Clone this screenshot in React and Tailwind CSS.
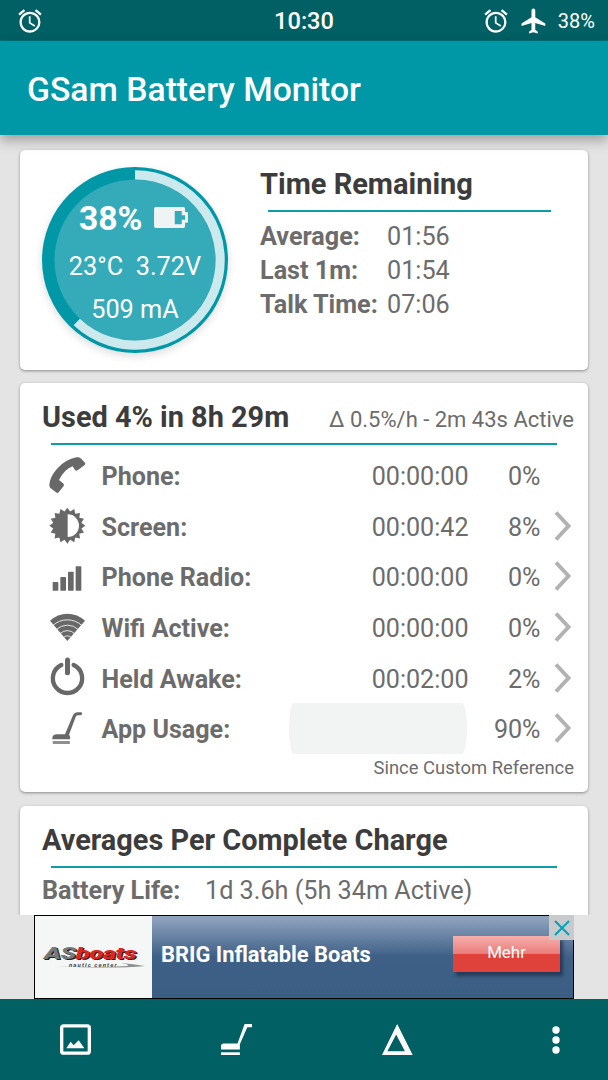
const usage = [
  { icon: "phone", label: "Phone:", time: "00:00:00", percent: "0%", more: false },
  { icon: "screen", label: "Screen:", time: "00:00:42", percent: "8%", more: true },
  { icon: "radio", label: "Phone Radio:", time: "00:00:00", percent: "0%", more: true },
  { icon: "wifi", label: "Wifi Active:", time: "00:00:00", percent: "0%", more: true },
  { icon: "power", label: "Held Awake:", time: "00:02:00", percent: "2%", more: true },
  { icon: "sweeper", label: "App Usage:", time: null, percent: "90%", more: true },
];

const remaining = [
  { label: "Average:", value: "01:56" },
  { label: "Last 1m:", value: "01:54" },
  { label: "Talk Time:", value: "07:06" },
];

function sunPoints(cx, cy, outer, inner, spikes) {
  const points = [];
  for (let i = 0; i < spikes * 2; i++) {
    const r = i % 2 === 0 ? outer : inner;
    const a = (i * Math.PI) / spikes;
    points.push(`${(cx + r * Math.sin(a)).toFixed(1)},${(cy - r * Math.cos(a)).toFixed(1)}`);
  }
  return points.join(" ");
}

const glyphs = {
  phone: (
    <path d="M88 4Q96 2 101 7L114 20Q117 24 113 27L93 42Q87 47 84 42L77 31Q52 40 36 72L48 82Q53 86 50 90L35 109Q31 113 27 109L10 96Q7 92 7 86Q9 62 30 38Q56 10 88 4Z" />
  ),
  screen: (
    <>
      <polygon points={sunPoints(61, 56, 54, 43, 16)} />
      <path d="M62 22A34 34 0 0 1 62 90Z" fill="#fff" />
    </>
  ),
  radio: (
    <>
      <rect x="17" y="75" width="17" height="26" rx="2" />
      <rect x="40" y="60" width="17" height="41" rx="2" />
      <rect x="63" y="44" width="17" height="57" rx="2" />
      <rect x="86" y="28" width="17" height="73" rx="2" />
    </>
  ),
  wifi: (
    <>
      <path d="M61 99L9 38Q32 17 61 17Q91 17 114 38Z" />
      <g fill="none" stroke="#fff" strokeWidth="2.5">
        <path d="M17 53A64 64 0 0 1 105 53" />
        <path d="M28 65A47 47 0 0 1 94 65" />
        <path d="M39 77A31 31 0 0 1 83 77" />
        <path d="M50 88A16 16 0 0 1 72 88" />
      </g>
    </>
  ),
  power: (
    <g fill="none" stroke="#686868" strokeLinecap="round">
      <path d="M80 18A44 44 0 1 1 43 18" strokeWidth="13" />
      <path d="M61.500 3V41" strokeWidth="21" stroke="#fff" />
      <path d="M61.500 3V41" strokeWidth="15" />
    </g>
  ),
  sweeper: (
    <>
      <path d="M16 91V86Q18 76 30 76H54L78 19Q82 10 92 10H102Q107 11 105 15Q104 19 99 19H92Q88 19 86 24L66 77Q69 79 69 84V91Z" />
      <rect x="17" y="96" width="52" height="9" rx="2" fill="#8f8f8f" />
    </>
  ),
};

function RowIcon({ name }) {
  return (
    <svg viewBox="0 0 120 120" className="h-10 w-10 shrink-0 overflow-visible" fill="#686868">
      {glyphs[name]}
    </svg>
  );
}

function AlarmIcon() {
  return (
    <svg viewBox="0 0 24 24" className="h-7 w-7" fill="#fff">
      <path d="M22 5.720l-4.600-3.860-1.290 1.530 4.600 3.860L22 5.720zM7.880 3.390L6.600 1.860 2 5.710l1.290 1.530 4.590-3.850zM12.500 8H11v6l4.750 2.850.75-1.230-4-2.370V8zM12 4c-4.970 0-9 4.030-9 9s4.020 9 9 9a9 9 0 0 0 0-18zm0 16c-3.870 0-7-3.130-7-7s3.130-7 7-7 7 3.130 7 7-3.130 7-7 7z" />
    </svg>
  );
}

function StatusBar() {
  return (
    <div className="flex h-[41px] shrink-0 items-center border-b border-[#007078] bg-[#006064] pt-px text-white">
      <div className="flex-1 pl-[16px]"><AlarmIcon /></div>
      <span className="pr-[3px] text-[23.6px] font-medium leading-[40px]">10:30</span>
      <div className="flex flex-1 items-center justify-end pr-[13px]">
        <AlarmIcon />
        <svg viewBox="0 0 24 24" className="ml-[9px] h-[30px] w-[30px]" fill="#fff">
          <path d="M21 16v-2l-8-5V3.500c0-.83-.67-1.500-1.500-1.500S10 2.670 10 3.500V9l-8 5v2l8-2.500V19l-2 1.500V22l3.500-1 3.500 1v-1.500L13 19v-5.500l8 2.500z" />
        </svg>
        <span className="ml-[9px] text-[20px] leading-[40px]">38%</span>
      </div>
    </div>
  );
}

function BatteryGauge() {
  return (
    <div className="grid h-[186px] w-[186px] shrink-0 rounded-full shadow-[0_3px_8px_rgba(0,0,0,0.14)]">
      <svg viewBox="0 0 186 186" className="col-start-1 row-start-1 h-[186px] w-[186px]">
        <circle cx="93" cy="93" r="93" fill="#0097a7" />
        <circle cx="93" cy="93" r="80.500" fill="#35abba" />
        <path d="M93 7.900A85.100 85.100 0 1 1 34.750 155" fill="none" stroke="#cce9ed" strokeWidth="9.200" />
      </svg>
      <div className="col-start-1 row-start-1 flex flex-col items-center pt-[30px] text-[25.3px] text-white">
        <div className="flex h-[44px] items-center gap-[11px] pb-[3px] pr-[3px]">
          <span className="pt-[3px] text-[33.7px] font-bold leading-[44px]">38%</span>
          <svg viewBox="0 0 103 63" className="h-[21px] w-[34.500px]">
            <path d="M5 0H88Q93 0 93 5V15H98Q103 15 103 20V42Q103 47 98 47H93V58Q93 63 88 63H5Q0 63 0 58V5Q0 0 5 0ZM62 12V52H83V38H93V25H83V12Z" fill="#eff3f4" fillRule="evenodd" />
          </svg>
        </div>
        <div className="h-[52px] whitespace-pre leading-[52px]">23°C  3.72V</div>
        <div className="h-[34px] leading-[34px]">509 mA</div>
      </div>
    </div>
  );
}

function Card({ className, children }) {
  return (
    <section className={`mx-5 shrink-0 rounded-[5px] bg-white shadow-[0_1px_3px_rgba(0,0,0,0.4)] ${className}`}>
      {children}
    </section>
  );
}

function UsageRow({ row }) {
  return (
    <div className="flex h-[50.600px] items-center text-[25.1px] leading-[50px]">
      <RowIcon name={row.icon} />
      <span className="ml-[14.5px] flex-1 pt-[2px] font-bold">{row.label}</span>
      {row.time ? (
        <span className="pt-[2px]">{row.time}</span>
      ) : (
        <span className="mb-[2px] mr-[1.5px] h-full w-[178px] rounded-[5px/50%] bg-[#f2f4f4]" />
      )}
      <span className="w-[72px] pt-[2px] text-right">{row.percent}</span>
      <span className="flex w-[33.5px] pb-[2px] pl-[11px]">
        {row.more && (
          <svg viewBox="0 0 20 32" className="h-8 w-5" fill="none" stroke="#b2b2b2" strokeWidth="4">
            <path d="M4 2.500L16.500 16L4 29.500" />
          </svg>
        )}
      </span>
    </div>
  );
}

function AdBanner() {
  return (
    <div className="relative ml-[34px] flex h-[84px] w-[540px] shrink-0 border-[1.500px] border-black">
      <div className="flex w-[117px] shrink-0 flex-col bg-[#f5f6f6] pl-[9px] pt-[29px]">
        <div className="h-4 origin-left scale-x-[1.51] whitespace-nowrap text-[17px] font-black italic leading-4 tracking-[-0.3px]">
          <span className="text-[#77787a] [text-shadow:1px_1px_0_#222]">AS</span>
          <span className="text-[#e22420] [text-shadow:1px_1px_0_#222]">boats</span>
        </div>
        <div className="ml-[25px] h-[7px] text-[6px] font-bold italic leading-[7px] tracking-[1.1px] text-[#444]">nautic center</div>
        <svg viewBox="0 0 92 5" className="-mt-[5px] ml-[9px] h-[5px] w-[92px]">
          <path d="M0 3Q60 6 92 3Q80 1 68 0Q78 2 74 3Q40 5 0 3Z" fill="#909090" />
        </svg>
      </div>
      <div className="flex flex-1 items-center bg-linear-to-b from-[#93a6c0] via-[#3e6086] via-50% to-[#3b5e85] pl-[9px] pr-[13px] text-white">
        <span className="flex-1 pb-[4px] text-[21.9px] font-bold">BRIG Inflatable Boats</span>
        <button className="mb-[6px] h-[36px] w-[107px] bg-linear-to-b from-[#f5b0ae] via-[#ea7b78] via-50% to-[#df413b] to-50% pb-[2px] text-[16.9px] shadow-[3px_4px_3px_rgba(20,35,60,0.6)]">
          Mehr
        </button>
      </div>
      <div className="absolute -right-px -top-px flex h-[25px] w-[25px] items-center justify-center bg-[#c9cacc]">
        <svg viewBox="0 0 16 16" className="h-4 w-4" stroke="#00a3bb" strokeWidth="2">
          <path d="M1 1L15 15M15 1L1 15" />
        </svg>
      </div>
    </div>
  );
}

function BottomBar() {
  return (
    <nav className="flex h-[81px] shrink-0 items-center bg-[#006064] pl-[60px]">
      <svg viewBox="0 0 93 92" className="h-[31px] w-[31px]">
        <rect x="5" y="5" width="83" height="82" rx="6" fill="none" stroke="#fff" strokeWidth="10" />
        <path d="M19 72L32 53L41 63L56 48L73 72Z" fill="#fff" />
      </svg>
      <svg viewBox="0 0 92 92" className="ml-[130px] h-[31px] w-[31px]" fill="#fff">
        <path d="M0 76V66Q0 58 8 58H49L70 0H92V10H78L56 60V76Z" />
        <rect y="84" width="56" height="8" />
      </svg>
      <svg viewBox="0 0 92 92" className="ml-[130px] h-[31px] w-[31px]">
        <path d="M45 0L91 92H0ZM42 31L16 81H68Z" fill="#fff" fillRule="evenodd" />
      </svg>
      <svg viewBox="0 0 8 28" className="ml-[139px] h-[28px] w-2" fill="#fff">
        <circle cx="4" cy="4" r="3.700" />
        <circle cx="4" cy="14" r="3.700" />
        <circle cx="4" cy="24" r="3.700" />
      </svg>
    </nav>
  );
}

export default function App() {
  return (
    <div className="flex h-[1080px] w-[608px] flex-col overflow-hidden bg-[#e4e4e4] font-['Roboto',sans-serif] text-[#6c6c6c]">
      <StatusBar />
      <header className="relative z-10 h-[94px] shrink-0 bg-[#0097a7] pl-[27px] pt-[2px] shadow-[0_5px_12px_rgba(0,0,0,0.32)]">
        <h1 className="text-[33.7px] font-medium leading-[94px] text-white">GSam Battery Monitor</h1>
      </header>

      <main className="flex h-[780px] shrink-0 flex-col overflow-hidden pt-[15px]">
        <Card className="flex h-[220px] pl-[22px] pt-[17px]">
          <BatteryGauge />
          <div className="ml-[32px] w-[300px]">
            <h2 className="h-[43px] text-[29px] font-bold leading-[34px] text-[#3c3c3c]">Time Remaining</h2>
            <div className="ml-[8px] h-[2px] w-[283px] bg-[#0d9cab]" />
            <div className="pt-[8px] text-[25.2px] leading-[34px]">
              {remaining.map((item) => (
                <div key={item.label} className="flex">
                  <span className="w-[127px] whitespace-nowrap font-bold">{item.label}</span>
                  <span>{item.value}</span>
                </div>
              ))}
            </div>
          </div>
        </Card>

        <Card className="mt-[13px] h-[409px] pl-[22px] pr-[14px] pt-[14px]">
          <div className="flex h-[46px] justify-between">
            <h2 className="text-[28.9px] font-bold leading-[40px] text-[#3c3c3c]">Used 4% in 8h 29m</h2>
            <span className="text-[22px] leading-[45px]">Δ 0.5%/h - 2m 43s Active</span>
          </div>
          <div className="ml-[9px] h-[2px] w-[506px] bg-[#0d9cab]" />
          <div className="pl-[5px] pt-[6px]">
            {usage.map((row) => (
              <UsageRow key={row.label} row={row} />
            ))}
          </div>
          <div className="text-right text-[18.4px] leading-[25px]">Since Custom Reference</div>
        </Card>

        <Card className="mt-[14px] h-[160px] pl-[22px] pt-[14px]">
          <h2 className="h-[46px] text-[28.9px] font-bold leading-[40px] text-[#3c3c3c]">Averages Per Complete Charge</h2>
          <div className="ml-[9px] h-[2px] w-[506px] bg-[#0d9cab]" />
          <div className="flex pt-[6px] text-[25.200px] leading-[34px]">
            <span className="w-[163px] font-bold">Battery Life:</span>
            <span>1d 3.6h (5h 34m Active)</span>
          </div>
        </Card>
      </main>

      <AdBanner />
      <BottomBar />
    </div>
  );
}
